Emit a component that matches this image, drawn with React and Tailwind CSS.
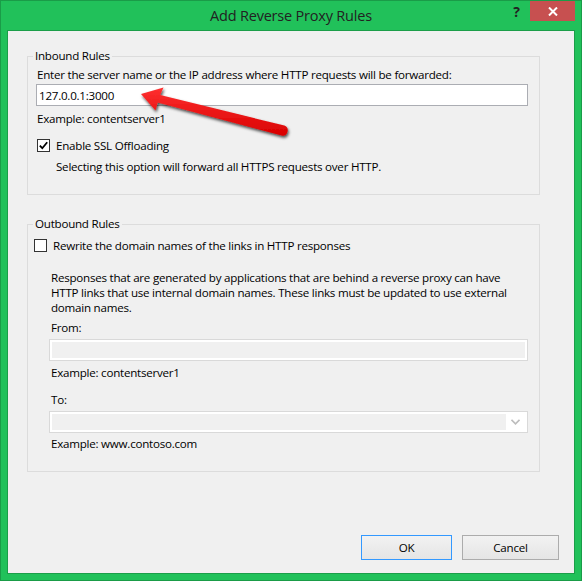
import { useState } from 'react';

const Checkbox = ({ checked, onChange }) => (
  <button
    onClick={onChange}
    className="w-[13px] h-[13px] shrink-0 border border-[#333333] bg-white flex items-center justify-center"
  >
    {checked && (
      <svg width="11" height="11" viewBox="0 0 11 11">
        <polyline points="1.8,5.6 4.3,8.2 9.2,2.2" fill="none" stroke="#000" strokeWidth="1.8" />
      </svg>
    )}
  </button>
);

const RedArrow = () => (
  <svg className="absolute left-0 top-0 pointer-events-none" width="582" height="581">
    <defs>
      <linearGradient id="arrowFill" x1="0" y1="0" x2="0" y2="1">
        <stop offset="0" stopColor="#ff3030" />
        <stop offset="1" stopColor="#d80000" />
      </linearGradient>
      <filter id="arrowShadow" x="-10%" y="-30%" width="130%" height="170%">
        <feDropShadow dx="1" dy="2" stdDeviation="1.4" floodColor="#000" floodOpacity="0.7" />
      </filter>
    </defs>
    <path
      d="M140,93 L162.5,86.5 L159.2,94 L283.3,124.6 A5.2,5.2 0 0 1 280.7,134.6 L156.7,101.6 L154.5,109.5 Z"
      fill="url(#arrowFill)"
      filter="url(#arrowShadow)"
    />
  </svg>
);

export default function App() {
  const [ssl, setSsl] = useState(true);
  const [rewrite, setRewrite] = useState(false);
  const [server, setServer] = useState('127.0.0.1:3000');

  return (
    <div className="relative w-[582px] h-[581px] bg-[#21c15a] border border-[#1a9c48] px-[6px] pb-[6px] flex flex-col font-['Open_Sans','Noto_Sans',sans-serif] text-[11.6px] leading-[15px] text-black">
      {/* Title bar */}
      <div className="relative h-[29px] flex items-center justify-center">
        <span className="text-[14.5px] text-[#222222] tracking-[-0.2px]">Add Reverse Proxy Rules</span>
        <div className="absolute right-0 top-0 flex items-start">
          <span className="mr-[10px] mt-[1px] text-[14px] leading-[20px] font-bold text-[#222222]">?</span>
          <button className="w-[45px] h-[20px] bg-[#c75050] flex items-center justify-center">
            <svg width="10" height="9" viewBox="0 0 10 9">
              <path d="M1,0.5 L9,8.5 M9,0.5 L1,8.5" stroke="#fff" strokeWidth="2" />
            </svg>
          </button>
        </div>
      </div>

      {/* Client area */}
      <div className="flex-1 flex flex-col bg-[#f0f0f0] border border-[#1b9e49] pl-[19px] pr-[15px] tracking-[-0.24px]">
        {/* Inbound Rules */}
        <fieldset className="mt-[17px] w-[513px] border border-[#dcdcdc] pl-[9px] pb-[20px]">
          <legend className="-ml-[4px] px-[2px] leading-[16px]">Inbound Rules</legend>
          <div className="mt-[3px]">
            Enter the server name or the IP address where HTTP requests will be forwarded:
          </div>
          <input
            value={server}
            onChange={(e) => setServer(e.target.value)}
            className="mt-[2px] -ml-[1px] w-[492px] h-[22px] border border-[#abadb3] bg-white px-[2px] outline-none"
          />
          <div className="mt-[5px]">Example: contentserver1</div>
          <div className="mt-[12px] flex items-center gap-[6px]">
            <Checkbox checked={ssl} onChange={() => setSsl(!ssl)} />
            <span>Enable SSL Offloading</span>
          </div>
          <div className="mt-[6px] pl-[19px]">
            Selecting this option will forward all HTTPS requests over HTTP.
          </div>
        </fieldset>

        {/* Outbound Rules */}
        <fieldset className="mt-[21px] w-[513px] border border-[#dcdcdc] pl-[6px] pb-[20px]">
          <legend className="-ml-[1px] px-[2px] leading-[16px]">Outbound Rules</legend>
          <div className="mt-[6px] flex items-center gap-[6px]">
            <Checkbox checked={rewrite} onChange={() => setRewrite(!rewrite)} />
            <span>Rewrite the domain names of the links in HTTP responses</span>
          </div>
          <div className="pl-[17px]">
            <p className="mt-[17px]">
              Responses that are generated by applications that are behind a reverse proxy can have
              <br />
              HTTP links that use internal domain names. These links must be updated to use external
              <br />
              domain names.
            </p>
            <div className="mt-[5px]">From:</div>
            <div className="mt-[4px] -ml-[2px] w-[479px] h-[22px] border border-[#d9d9d9] bg-[#f0f0f0] shadow-[inset_0_0_0_2px_#ffffff]" />
            <div className="mt-[4px]">Example: contentserver1</div>
            <div className="mt-[12px]">To:</div>
            <div className="mt-[4px] -ml-[2px] w-[479px] h-[22px] border border-[#d9d9d9] bg-white p-[2px] flex">
              <div className="flex-1 bg-[#f0f0f0]" />
              <div className="w-[19px] flex items-center justify-center">
                <svg width="9" height="6" viewBox="0 0 9 6">
                  <path d="M0.5,0.8 L4.5,4.8 L8.5,0.8" fill="none" stroke="#bdbdbd" strokeWidth="1.6" />
                </svg>
              </div>
            </div>
            <div className="mt-[3px]">Example: www.contoso.com</div>
          </div>
        </fieldset>

        {/* Buttons */}
        <div className="mt-auto mb-[13px] flex justify-end gap-[10px]">
          <button className="w-[91px] h-[25px] border border-[#3399ff] bg-gradient-to-b from-[#f2f2f2] to-[#e5e5e5]">
            OK
          </button>
          <button className="w-[97px] h-[25px] border border-[#acacac] bg-gradient-to-b from-[#f2f2f2] to-[#e5e5e5]">
            Cancel
          </button>
        </div>
      </div>

      <RedArrow />
    </div>
  );
}
